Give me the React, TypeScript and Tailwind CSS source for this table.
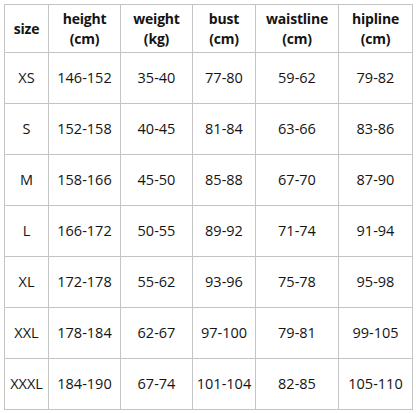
const COLS = [
  { key: "size", label: ["size"], w: 44 },
  { key: "height", label: ["height", "(cm)"], w: 72 },
  { key: "weight", label: ["weight", "(kg)"], w: 72 },
  { key: "bust", label: ["bust", "(cm)"], w: 63 },
  { key: "waist", label: ["waistline", "(cm)"], w: 83 },
  { key: "hip", label: ["hipline", "(cm)"], w: 74 },
];

const ROWS: string[][] = [
  ["XS", "146-152", "35-40", "77-80", "59-62", "79-82"],
  ["S", "152-158", "40-45", "81-84", "63-66", "83-86"],
  ["M", "158-166", "45-50", "85-88", "67-70", "87-90"],
  ["L", "166-172", "50-55", "89-92", "71-74", "91-94"],
  ["XL", "172-178", "55-62", "93-96", "75-78", "95-98"],
  ["XXL", "178-184", "62-67", "97-100", "79-81", "99-105"],
  ["XXXL", "184-190", "67-74", "101-104", "82-85", "105-110"],
];

export default function App() {
  return (
    <div
      className="w-[416px] h-[413px] bg-white pt-[4px] pl-[4px] text-[#141414]"
      style={{ fontFamily: '"Open Sans", sans-serif' }}
    >
      <table className="border-collapse table-fixed">
        <colgroup>
          {COLS.map((c) => (
            <col key={c.key} style={{ width: c.w }} />
          ))}
        </colgroup>
        <thead>
          <tr className="h-[48px]">
            {COLS.map((c) => (
              <th
                key={c.key}
                className="border border-[#c4c4c4] p-0 text-center align-middle font-bold text-[14px] leading-[20px] tracking-[-0.2px]"
              >
                {c.label.map((l) => (
                  <div key={l}>{l}</div>
                ))}
              </th>
            ))}
          </tr>
        </thead>
        <tbody>
          {ROWS.map((r) => (
            <tr key={r[0]} className="h-[51px]">
              {r.map((v, i) => (
                <td
                  key={i}
                  className="border border-[#c4c4c4] p-0 text-center align-middle text-[14.5px] whitespace-nowrap"
                >
                  {v}
                </td>
              ))}
            </tr>
          ))}
        </tbody>
      </table>
    </div>
  );
}
